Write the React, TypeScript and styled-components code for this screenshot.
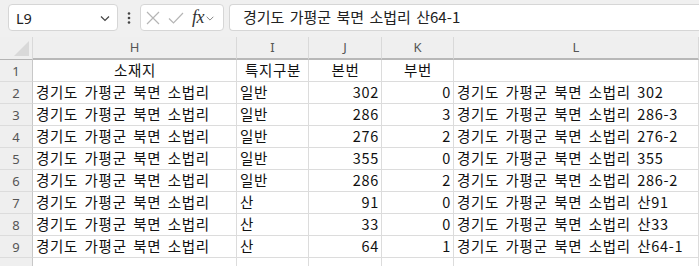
import React from "react";
import styled, { createGlobalStyle } from "styled-components";

const Global = createGlobalStyle`
  html, body { margin: 0; padding: 0; background: #f0f0f0; }
  body { font-family: "Noto Sans CJK KR", "Noto Sans", sans-serif; overflow: hidden; }
`;

const Page = styled.div`
  width: 699px;
  height: 266px;
  overflow: hidden;
  background: #f0f0f0;
`;

const Toolbar = styled.div`
  display: flex;
  align-items: center;
  height: 37px;
  padding: 0 0 2px 8px;
  box-sizing: border-box;
`;

const Box = styled.div<{ $w?: number; $flex?: boolean }>`
  height: 27px;
  box-sizing: border-box;
  background: #fff;
  border: 1px solid #d6d6d6;
  border-radius: 4px;
  display: flex;
  align-items: center;
  ${(p) => (p.$w ? `width: ${p.$w}px;` : "")}
  ${(p) => (p.$flex ? "flex: 1; border-right: none; border-radius: 4px 0 0 4px;" : "")}
`;

const NameText = styled.span`
  font-family: "Noto Sans", "Liberation Sans", sans-serif;
  font-size: 14.5px;
  color: #222;
  padding-left: 7px;
  flex: 1;
`;

const Dots = styled.div`
  width: 22px;
  display: flex;
  justify-content: center;
`;

const FxText = styled.span`
  font-family: "Liberation Serif", "DejaVu Serif", serif;
  font-style: italic;
  font-size: 18px;
  color: #333;
  margin-left: 8px;
  letter-spacing: -0.5px;
`;

const FormulaText = styled.span`
  font-size: 15px;
  color: #222;
  padding-left: 13px;
  word-spacing: 2px;
  line-height: 1;
  position: relative;
  top: -1px;
`;

const Sheet = styled.div`
  display: grid;
  grid-template-columns: 33px 204px 72px 73px 72px 1fr;
  grid-auto-rows: 22px;
  grid-template-rows: 23px;
`;

const Corner = styled.div`
  background: #efefef;
  border-right: 1px solid #d9d9d9;
  border-bottom: 1px solid #b4b4b4;
  position: relative;
  &::after {
    content: "";
    position: absolute;
    right: 3px;
    bottom: 3px;
    width: 0;
    height: 0;
    border-left: 15px solid transparent;
    border-bottom: 15px solid #d9d9d9;
  }
`;

const ColHead = styled.div`
  background: #efefef;
  border-right: 1px solid #d9d9d9;
  border-bottom: 2px solid #b8b8b8;
  display: flex;
  align-items: center;
  justify-content: center;
  font-family: "Noto Sans", "Liberation Sans", sans-serif;
  font-size: 13px;
  color: #555;
  padding-bottom: 1px;
  box-sizing: border-box;
`;

const RowHead = styled.div`
  background: #efefef;
  border-right: 1px solid #c8c8c8;
  border-bottom: 1px solid #dcdcdc;
  display: flex;
  align-items: center;
  justify-content: center;
  font-family: "Noto Sans", "Liberation Sans", sans-serif;
  font-size: 13px;
  color: #555;
`;

const Cell = styled.div<{ $align?: "left" | "right" | "center" }>`
  background: #fff;
  border-right: 1px solid #dcdcdc;
  border-bottom: 1px solid #dcdcdc;
  display: flex;
  align-items: center;
  justify-content: ${(p) =>
    p.$align === "right" ? "flex-end" : p.$align === "center" ? "center" : "flex-start"};
  padding: 0 2px 0 3px;
  box-sizing: border-box;
  font-size: 14.5px;
  color: #111;
  white-space: nowrap;
  overflow: visible;
  letter-spacing: 0.7px;
  word-spacing: 2.5px;
  line-height: 1;
`;

const Chevron = ({ size = 12, color = "#444" }: { size?: number; color?: string }) => (
  <svg width={size} height={size} viewBox="0 0 12 12" style={{ marginRight: 6 }}>
    <path d="M2 4.5 L6 8.5 L10 4.5" fill="none" stroke={color} strokeWidth="1.2" />
  </svg>
);

const rows = [
  ["경기도 가평군 북면 소법리", "일반", "302", "0", "경기도 가평군 북면 소법리 302"],
  ["경기도 가평군 북면 소법리", "일반", "286", "3", "경기도 가평군 북면 소법리 286-3"],
  ["경기도 가평군 북면 소법리", "일반", "276", "2", "경기도 가평군 북면 소법리 276-2"],
  ["경기도 가평군 북면 소법리", "일반", "355", "0", "경기도 가평군 북면 소법리 355"],
  ["경기도 가평군 북면 소법리", "일반", "286", "2", "경기도 가평군 북면 소법리 286-2"],
  ["경기도 가평군 북면 소법리", "산", "91", "0", "경기도 가평군 북면 소법리 산91"],
  ["경기도 가평군 북면 소법리", "산", "33", "0", "경기도 가평군 북면 소법리 산33"],
  ["경기도 가평군 북면 소법리", "산", "64", "1", "경기도 가평군 북면 소법리 산64-1"],
];

export default function App() {
  return (
    <Page>
      <Global />
      <Toolbar>
        <Box $w={110}>
          <NameText>L9</NameText>
          <Chevron />
        </Box>
        <Dots>
          <svg width="4" height="12" viewBox="0 0 4 12">
            <circle cx="2" cy="1.5" r="1.3" fill="#444" />
            <circle cx="2" cy="6" r="1.3" fill="#444" />
            <circle cx="2" cy="10.5" r="1.3" fill="#444" />
          </svg>
        </Dots>
        <Box $w={84}>
          <svg width="14" height="14" viewBox="0 0 14 14" style={{ marginLeft: 5 }}>
            <path d="M1 1 L13 13 M13 1 L1 13" stroke="#b5b5b5" strokeWidth="1.2" fill="none" />
          </svg>
          <svg width="16" height="14" viewBox="0 0 16 14" style={{ marginLeft: 8 }}>
            <path d="M1 7.5 L5.5 12 L15 2" stroke="#b5b5b5" strokeWidth="1.2" fill="none" />
          </svg>
          <FxText>fx</FxText>
          <svg width="10" height="10" viewBox="0 0 12 12" style={{ marginLeft: 1 }}>
            <path d="M2 4.5 L6 8.5 L10 4.5" fill="none" stroke="#888" strokeWidth="1.2" />
          </svg>
        </Box>
        <div style={{ width: 5 }} />
        <Box $flex>
          <FormulaText>경기도 가평군 북면 소법리 산64-1</FormulaText>
        </Box>
      </Toolbar>
      <Sheet>
        <Corner />
        {["H", "I", "J", "K", "L"].map((c) => (
          <ColHead key={c}>{c}</ColHead>
        ))}
        <RowHead>1</RowHead>
        <Cell $align="center">소재지</Cell>
        <Cell $align="center">특지구분</Cell>
        <Cell $align="center">본번</Cell>
        <Cell $align="center">부번</Cell>
        <Cell />
        {rows.map((r, i) => (
          <React.Fragment key={i}>
            <RowHead>{i + 2}</RowHead>
            <Cell>{r[0]}</Cell>
            <Cell>{r[1]}</Cell>
            <Cell $align="right">{r[2]}</Cell>
            <Cell $align="right">{r[3]}</Cell>
            <Cell>{r[4]}</Cell>
          </React.Fragment>
        ))}
        <RowHead />
        <Cell />
        <Cell />
        <Cell />
        <Cell />
        <Cell />
      </Sheet>
    </Page>
  );
}
